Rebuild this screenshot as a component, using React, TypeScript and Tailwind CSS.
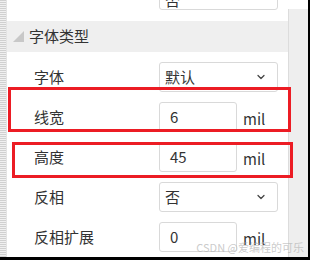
import { ChevronDown } from "lucide-react";

const font = { fontFamily: '"Noto Sans CJK SC", "Noto Sans", sans-serif' };

interface SelectProps {
  value: string;
}

const SelectBox = ({ value }: SelectProps) => (
  <div className="flex h-[30px] w-[119px] items-center justify-between rounded-[3px] border border-[#d9d9d9] bg-white pr-[10px] pl-[5px]">
    <span className="text-[15px] text-[#333]">{value}</span>
    <ChevronDown className="size-[12px] text-[#444]" strokeWidth={2.5} />
  </div>
);

const UnitInput = ({ value }: SelectProps) => (
  <div className="flex items-center">
    <div className="flex h-[30px] w-[78px] items-center rounded-[3px] border border-[#d9d9d9] bg-white pl-[10px]">
      <span className="text-[15px] text-[#333]">{value}</span>
    </div>
    <span className="mt-[5px] ml-[6px] text-[15px] text-[#333]">mil</span>
  </div>
);

interface RowProps {
  label: string;
  children: React.ReactNode;
}

const Row = ({ label, children }: RowProps) => (
  <div className="flex h-[30px] items-center">
    <span className="w-[152px] pl-[27px] text-[15px] text-[#333]">{label}</span>
    {children}
  </div>
);

export default function App() {
  return (
    <div
      className="relative flex h-[260px] w-[310px] overflow-hidden border-r-2 border-b-[3px] border-black bg-white"
      style={font}
    >
      {/* left dotted strip */}
      <div className="w-[6px] bg-[repeating-linear-gradient(to_bottom,#d0d0d0_0px,#d0d0d0_1px,#f0f0f0_1px,#f0f0f0_2px)]" />
      <div className="w-px bg-[#e4e4e4]" />

      {/* main panel */}
      <div className="flex w-[281px] flex-col">
        <div className="-mt-[20px] flex h-[30px] justify-end pr-[10px]">
          <div className="flex h-[30px] w-[119px] items-end rounded-[3px] border border-[#d9d9d9] pl-[5px] text-[15px] leading-[18px] text-[#333]">
            否
          </div>
        </div>

        <div className="mt-[11px] flex h-[31px] items-center bg-[#efefef]">
          <div className="ml-[6px] h-0 w-0 border-b-[11px] border-l-[11px] border-b-[#c8c8c8] border-l-transparent" />
          <span className="ml-[5px] text-[15px] text-[#333]">字体类型</span>
        </div>

        <div className="mt-[10px] flex flex-col gap-[10px]">
          <Row label="字体">
            <SelectBox value="默认" />
          </Row>
          <Row label="线宽">
            <UnitInput value="6" />
          </Row>
          <Row label="高度">
            <UnitInput value="45" />
          </Row>
          <Row label="反相">
            <SelectBox value="否" />
          </Row>
          <Row label="反相扩展">
            <UnitInput value="0" />
          </Row>
        </div>
      </div>

      {/* right gray panel */}
      <div className="mt-[9px] w-[20px] border-l border-[#dcdcdc] bg-[#eeeeee]" />

      {/* annotation boxes */}
      <div className="absolute top-[87px] left-[8px] h-[45px] w-[283px] border-[3px] border-[#ec1c24]" />
      <div className="absolute top-[142px] left-[12px] h-[36px] w-[281px] border-[3px] border-[#ec1c24]" />

      {/* watermark */}
      <span
        className="absolute top-[240px] right-[4px] text-[11px] leading-[14px] text-[#b4b4b4]/70"
        style={{ fontFamily: '"Noto Sans CJK SC", "Liberation Sans", sans-serif' }}
      >
        CSDN @爱编程的可乐
      </span>
    </div>
  );
}
